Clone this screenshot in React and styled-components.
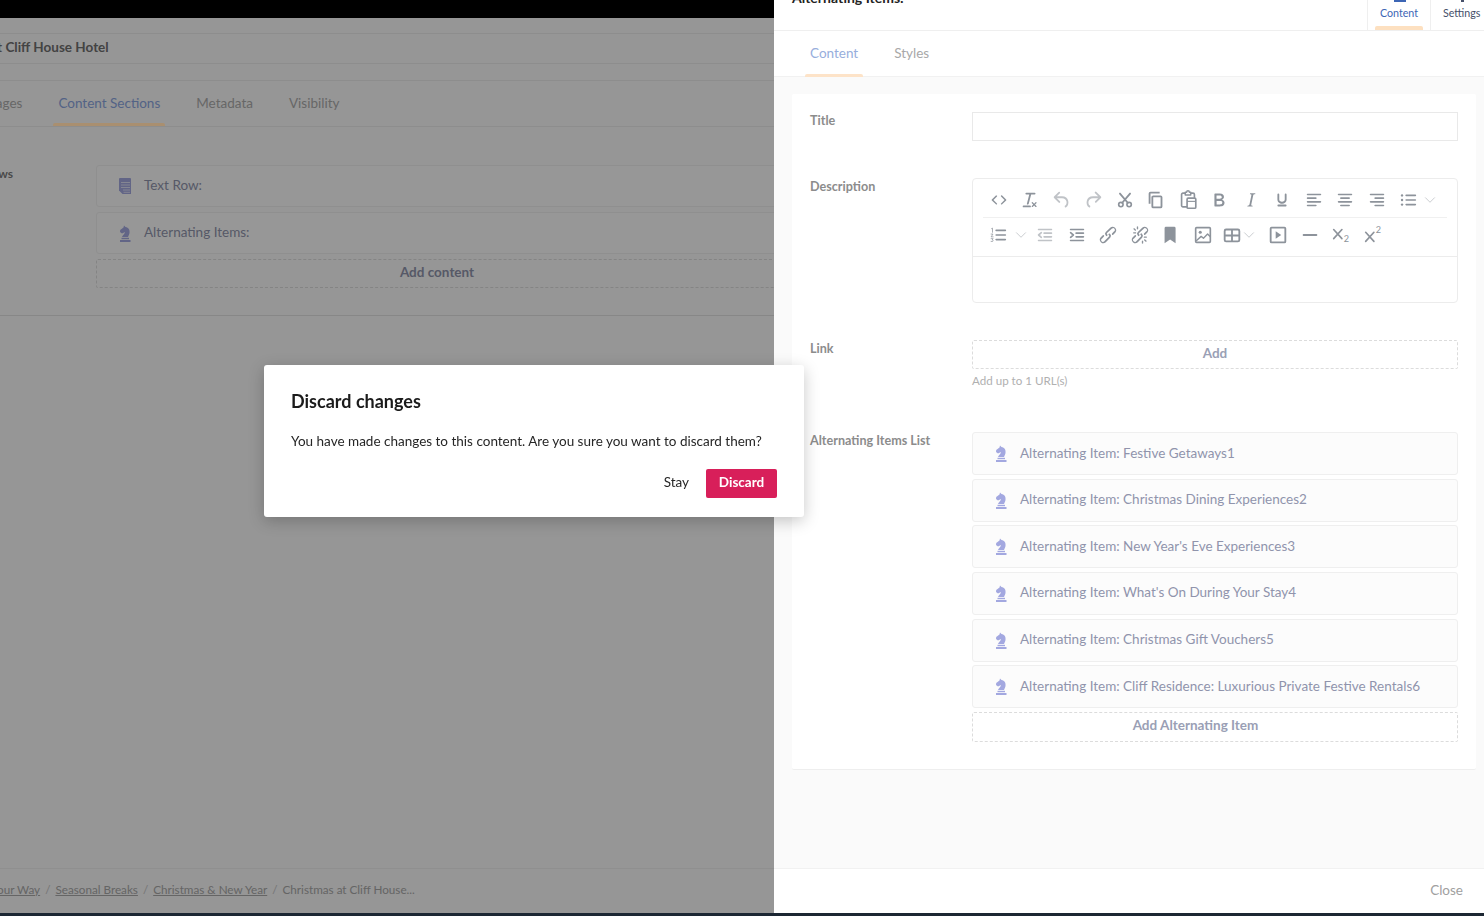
import styled, { createGlobalStyle } from "styled-components";

const GlobalStyle = createGlobalStyle`
  html, body { margin: 0; padding: 0; height: 100%; overflow: hidden; }
  body { font-family: Lato, "Open Sans", sans-serif; background: #1c2733; }
`;

const Page = styled.div`
  display: flex;
  width: 1484px;
  height: 913px;
  overflow: hidden;
  border-bottom: 3px solid #1c2733;
`;

/* ---------- page behind the drawer ---------- */

const Behind = styled.div`
  position: relative;
  width: 774px;
  flex-shrink: 0;
  overflow: hidden;
  background: #fafafa;
  display: flex;
  flex-direction: column;
`;

const Dim = styled.div`
  position: absolute;
  inset: 0;
  background: rgba(0, 0, 0, 0.4);
`;

const BlackBar = styled.div`
  height: 18px;
  flex-shrink: 0;
  background: #000;
`;

const Strip = styled.div`
  height: 15px;
  flex-shrink: 0;
  border-bottom: 1px solid #ececec;
`;

const PageTitle = styled.div`
  height: 26px;
  flex-shrink: 0;
  padding-bottom: 3px;
  border-bottom: 1px solid #ececec;
  display: flex;
  align-items: center;
  margin-left: -73px;
  font-size: 13.5px;
  font-weight: 700;
  color: #707070;
  white-space: nowrap;
`;

const TitleGap = styled.div`
  height: 16px;
  flex-shrink: 0;
  border-bottom: 1px solid #ececec;
`;

const PageTabs = styled.div`
  height: 45px;
  flex-shrink: 0;
  border-bottom: 1px solid #ececec;
  display: flex;
  margin-left: -24px;
  gap: 26px;
`;

const PageTab = styled.div`
  position: relative;
  padding: 0 5px 2px;
  display: flex;
  align-items: center;
  font-size: 13.5px;
  color: ${(p) => (p.$active ? "#8aa5e0" : "#acacac")};
  ${(p) =>
    p.$active &&
    `&::after {
      content: "";
      position: absolute;
      z-index: 1;
      left: 0;
      right: 0;
      bottom: 0;
      height: 3px;
      border-radius: 2px 2px 0 0;
      background: #a98f70;
    }`}
`;

const RowsSection = styled.div`
  height: 189px;
  flex-shrink: 0;
  border-bottom: 1px solid #e2e2e2;
  display: flex;
  padding-top: 38px;
  box-sizing: border-box;
  margin-left: -40px;
`;

const RowsLabel = styled.div`
  width: 136px;
  flex-shrink: 0;
  text-align: right;
  padding-right: 83px;
  box-sizing: border-box;
  font-size: 12px;
  font-weight: 700;
  line-height: 18px;
  color: #7a7a7a;
`;

const RowsList = styled.div`
  width: 682px;
  flex-shrink: 0;
  display: flex;
  flex-direction: column;
  gap: 5px;
`;

const ContentRow = styled.div`
  box-sizing: border-box;
  height: ${(p) => p.$h}px;
  border: 1px solid #efefef;
  border-radius: 3px;
  background: #fcfcfc;
  display: flex;
  align-items: center;
  padding: 0 0 2px 22px;
  gap: 13px;
  font-size: 13.5px;
  color: #9094ac;
`;

const RowIcon = styled.span`
  width: 12px;
  display: flex;
  justify-content: center;
  margin-top: 2px;
`;

const DashedAdd = styled.div`
  box-sizing: border-box;
  height: ${(p) => p.$h}px;
  border: 1px dashed #dcdcdc;
  border-radius: 2px;
  display: flex;
  align-items: center;
  justify-content: center;
  font-size: 13.5px;
  font-weight: 700;
  padding: 0 ${(p) => p.$pr || 0}px 3px 0;
  color: ${(p) => p.$color || "#9094ac"};
`;

const Spacer = styled.div`
  flex: 1;
`;

const Breadcrumb = styled.div`
  height: 45px;
  flex-shrink: 0;
  border-top: 1px solid #eee;
  box-sizing: border-box;
  display: flex;
  align-items: center;
  padding-bottom: 5px;
  font-size: 11.7px;
  color: #a8a8a8;
  margin-left: -34px;
  white-space: nowrap;
`;

const Crumb = styled.span`
  text-decoration: underline;
`;

const CrumbSlash = styled.span`
  margin: 0 5px;
  color: #c4c4c4;
`;

/* ---------- drawer ---------- */

const Drawer = styled.div`
  width: 710px;
  flex-shrink: 0;
  background: #fafafa;
  display: flex;
  flex-direction: column;
`;

const DrawerHead = styled.div`
  height: 31px;
  flex-shrink: 0;
  background: #fff;
  border-bottom: 1px solid #efefef;
  box-sizing: border-box;
  display: flex;
  overflow: hidden;
`;

const DrawerTitle = styled.div`
  flex: 1;
  padding-left: 18px;
  margin-top: -11px;
  font-size: 14px;
  font-weight: 700;
  line-height: 18px;
  color: #222;
`;

const HeadTab = styled.div`
  position: relative;
  box-sizing: border-box;
  width: ${(p) => p.$w}px;
  border-left: 1px solid #efefef;
  display: flex;
  flex-direction: column;
  align-items: ${(p) => (p.$inset ? "flex-start" : "center")};
  padding: 6px 0 0 ${(p) => p.$inset || 0}px;
  font-size: 10.7px;
  line-height: 14px;
  color: ${(p) => (p.$active ? "#3d66b5" : "#46506a")};
  ${(p) =>
    p.$active &&
    `&::after {
      content: "";
      position: absolute;
      left: 7px;
      right: 7px;
      bottom: 0;
      height: 4px;
      border-radius: 2px 2px 0 0;
      background: #fde0c0;
    }`}
`;

const HeadIconCut = styled.span`
  position: absolute;
  top: 0;
  left: ${(p) => p.$x}px;
  height: 2px;
  width: ${(p) => p.$w}px;
  background: ${(p) => p.$color};
`;

const DrawerTabs = styled.div`
  height: 46px;
  flex-shrink: 0;
  background: #fff;
  border-bottom: 1px solid #f1f1f1;
  box-sizing: border-box;
  display: flex;
  padding-left: 31px;
  gap: 26px;
`;

const DrawerTab = styled.div`
  position: relative;
  padding: 0 5px 2px;
  display: flex;
  align-items: center;
  font-size: 13.5px;
  color: ${(p) => (p.$active ? "#97aedc" : "#a8a8a8")};
  ${(p) =>
    p.$active &&
    `&::after {
      content: "";
      position: absolute;
      left: 0;
      right: 0;
      bottom: -1px;
      height: 3px;
      border-radius: 2px 2px 0 0;
      background: #fde3c8;
    }`}
`;

const DrawerBody = styled.div`
  flex: 1;
  padding: 17px 8px 0 18px;
`;

const Card = styled.div`
  box-sizing: border-box;
  background: #fff;
  height: 676px;
  padding: 18px 18px 0;
  border-bottom: 1px solid #eee;
  border-radius: 2px;
`;

const Field = styled.div`
  display: grid;
  grid-template-columns: 162px 486px;
  margin-bottom: ${(p) => p.$mb}px;
`;

const Label = styled.div`
  font-size: 12.6px;
  font-weight: 700;
  line-height: 18px;
  color: #8c8c8c;
`;

const TextInput = styled.div`
  box-sizing: border-box;
  height: 29px;
  border: 1px solid #e9e9e9;
`;

const Editor = styled.div`
  box-sizing: border-box;
  height: 125px;
  border: 1px solid #ececec;
  border-radius: 4px;
  display: flex;
  flex-direction: column;
`;

const Toolbars = styled.div`
  height: 78px;
  flex-shrink: 0;
  box-sizing: border-box;
  border-bottom: 1px solid #ececec;
  padding: 0 10px;
  display: flex;
  flex-direction: column;
`;

const ToolRow = styled.div`
  height: ${(p) => p.$h}px;
  display: flex;
  align-items: center;
  padding: ${(p) => p.$pt || 0}px 0 ${(p) => p.$pb || 0}px;
  border-bottom: ${(p) => (p.$line ? "1px solid #f0f0f0" : "none")};
  box-sizing: border-box;
`;

const Tool = styled.span`
  width: ${(p) => p.$w || 31.5}px;
  flex-shrink: 0;
  display: flex;
  justify-content: center;
  opacity: ${(p) => (p.$faint ? 0.55 : 1)};
  color: #8d939b;

  svg {
    flex-shrink: 0;
  }
`;

const Help = styled.div`
  margin-top: 4px;
  font-size: 11.6px;
  line-height: 15px;
  color: #b0b0b0;
`;

const ItemList = styled.div`
  display: flex;
  flex-direction: column;
  gap: 3.67px;
`;

const DrawerFoot = styled.div`
  height: 45px;
  flex-shrink: 0;
  box-sizing: border-box;
  background: #fff;
  border-top: 1px solid #f1f1f1;
  display: flex;
  align-items: center;
  justify-content: flex-end;
  padding: 0 21px 3px 0;
  font-size: 13.5px;
  color: #a0a0a0;
`;

/* ---------- modal ---------- */

const Modal = styled.div`
  position: fixed;
  left: 264px;
  top: 365px;
  width: 540px;
  height: 152px;
  box-sizing: border-box;
  padding: 25px 27px 0;
  background: #fff;
  border-radius: 3px;
  box-shadow: 0 4px 16px rgba(0, 0, 0, 0.22);
`;

const ModalTitle = styled.div`
  font-size: 18px;
  font-weight: 700;
  line-height: 22px;
  color: #1b1b1b;
`;

const ModalText = styled.div`
  margin-top: 20px;
  font-size: 13.5px;
  line-height: 18px;
  color: #262626;
  white-space: nowrap;
`;

const ModalActions = styled.div`
  margin-top: 19px;
  display: flex;
  justify-content: flex-end;
  align-items: center;
  gap: 17px;
`;

const StayButton = styled.div`
  font-size: 13.5px;
  padding-bottom: 4px;
  color: #262626;
`;

const DiscardButton = styled.div`
  width: 71px;
  height: 29px;
  box-sizing: border-box;
  padding-bottom: 4px;
  border-radius: 2px;
  background: #d81f5a;
  color: #fff;
  font-size: 13.5px;
  font-weight: 700;
  display: flex;
  align-items: center;
  justify-content: center;
`;

/* ---------- icons ---------- */

const Svg = ({ children, size = 24 }) => (
  <svg width={size} height={size} viewBox="0 0 24 24" fill="currentColor">
    {children}
  </svg>
);

const Lines = ({ d, w = 2 }) => (
  <path d={d} fill="none" stroke="currentColor" strokeWidth={w} strokeLinecap="round" strokeLinejoin="round" />
);

const ICONS = {
  code: <path d="M9.8 15.7c.3.3.3.8 0 1-.3.4-.9.4-1.2 0l-4.4-4.1a.8.8 0 0 1 0-1.2l4.4-4.2c.3-.3.9-.3 1.2 0 .3.3.3.8 0 1.1L6 12l3.8 3.7zM14.2 15.7c-.3.3-.3.8 0 1 .4.4.9.4 1.2 0l4.4-4.1c.3-.3.3-.9 0-1.2l-4.4-4.2a.8.8 0 0 0-1.2 0c-.3.3-.3.8 0 1.1L18 12l-3.8 3.7z" />,
  clear: <path d="M13.2 6a1 1 0 0 1 0 .2l-2.6 10a1 1 0 0 1-1 .8h-.2a.8.8 0 0 1-.8-1l2.6-10H8a1 1 0 1 1 0-2h9a1 1 0 0 1 0 2h-3.8zM5 18h7a1 1 0 0 1 0 2H5a1 1 0 0 1 0-2zm13 1.5L16.5 18 15 19.5a.7.7 0 0 1-1-1l1.5-1.5-1.5-1.5a.7.7 0 0 1 1-1l1.5 1.5 1.5-1.5a.7.7 0 0 1 1 1L17.5 17l1.5 1.5a.7.7 0 0 1-1 1z" />,
  undo: <path d="M6.4 8H12c3.7 0 6.2 2 6.8 5.1.6 2.7-.4 5.6-2.3 6.8a1 1 0 0 1-1-1.8c1.1-.6 1.8-2.7 1.4-4.6-.5-2.1-2.1-3.5-4.9-3.5H6.4l3.3 3.3a1 1 0 1 1-1.4 1.4l-5-5a1 1 0 0 1 0-1.4l5-5a1 1 0 0 1 1.4 1.4L6.4 8z" />,
  redo: <path d="M17.6 10H12c-2.8 0-4.4 1.4-4.9 3.5-.4 2 .3 4 1.4 4.6a1 1 0 1 1-1 1.8c-2-1.2-2.9-4.1-2.3-6.8.6-3 3-5.1 6.8-5.1h5.6l-3.3-3.3a1 1 0 1 1 1.4-1.4l5 5a1 1 0 0 1 0 1.4l-5 5a1 1 0 0 1-1.4-1.4l3.3-3.3z" />,
  cut: (
    <>
      <Lines d="M6.5 5l8.5 10M17.500 5L9 15" />
      <circle cx="7.5" cy="17" r="2.4" fill="none" stroke="currentColor" strokeWidth="1.8" />
      <circle cx="16.5" cy="17" r="2.4" fill="none" stroke="currentColor" strokeWidth="1.8" />
    </>
  ),
  copy: <path d="M16 3H6a2 2 0 0 0-2 2v11h2V5h10V3zm1 4a2 2 0 0 1 2 2v10a2 2 0 0 1-2 2H9a2 2 0 0 1-2-2V9c0-1.100.9-2 2-2h8zm0 2H9v10h8V9z" />,
  paste: (
    <>
      <Lines d="M10.500 19.500H6.500a1.500 1.500 0 0 1-1.500-1.500V6a1.500 1.500 0 0 1 1.500-1.500h2M15.500 4.500h2A1.500 1.500 0 0 1 19 6v3" w={1.8} />
      <Lines d="M9 6.500V3.500h1.500a1.500 1.500 0 0 1 3 0H15v3z" w={1.6} />
      <rect x="11" y="10" width="9.500" height="11" rx="1.200" fill="none" stroke="currentColor" strokeWidth="1.800" />
      <path d="M11 13.500h9.500" stroke="currentColor" strokeWidth="1.200" />
    </>
  ),
  bold: <path d="M7.800 19c-.3 0-.5 0-.6-.2l-.2-.5V5.700c0-.2 0-.4.2-.5l.6-.2h5c1.500 0 2.700.3 3.500 1 .7.6 1.100 1.400 1.100 2.500a3 3 0 0 1-.6 1.900c-.4.6-1 1-1.600 1.200.4.1.9.3 1.300.6s.8.7 1 1.200c.4.4.5 1 .5 1.600 0 1.300-.4 2.300-1.300 3-.8.7-2.100 1-3.800 1H7.800zm5-8.300c.6 0 1.200-.1 1.600-.5.4-.3.6-.7.6-1.300 0-1.100-.8-1.700-2.300-1.700H9.300v3.500h3.400zm.5 6c.7 0 1.300-.1 1.700-.4.4-.4.6-.9.6-1.500s-.2-1-.7-1.400c-.4-.3-1-.4-2-.4H9.400v3.800h4z" />,
  italic: <path d="M16.700 4.700l-.1.9h-.3c-.6 0-1 0-1.400.3-.3.3-.4.6-.5 1.100l-2.100 9.800v.6c0 .5.4.8 1.400.8h.2l-.2.8H8l.2-.8h.2c1.100 0 1.800-.5 2-1.500l2-9.800.1-.5c0-.6-.4-.8-1.400-.8h-.3l.2-.9h5.800z" />,
  underline: <path d="M16 5c.6 0 1 .4 1 1v5.500a4 4 0 0 1-.4 1.800l-1 1.400a5.300 5.300 0 0 1-5.500 1 5 5 0 0 1-1.600-1c-.5-.4-.8-.9-1.100-1.400a4 4 0 0 1-.4-1.800V6c0-.6.4-1 1-1s1 .4 1 1v5.500c0 .3 0 .6.2 1l.6.7a3.300 3.300 0 0 0 2.200.8 3.400 3.400 0 0 0 2.200-.8c.3-.2.4-.5.6-.8l.2-.9V6c0-.6.4-1 1-1zM8 17h8c.6 0 1 .4 1 1s-.4 1-1 1H8a1 1 0 0 1 0-2z" />,
  alignLeft: <Lines d="M5 6h14M5 10h9M5 14h14M5 18h9" w={1.800} />,
  alignCenter: <Lines d="M5 6h14M7.500 10h9M5 14h14M7.500 18h9" w={1.800} />,
  alignRight: <Lines d="M5 6h14M10 10h9M5 14h14M10 18h9" w={1.800} />,
  list: (
    <>
      <Lines d="M10 7h10M10 12h10M10 17h10" w={1.800} />
      <circle cx="5.500" cy="7" r="1.300" />
      <circle cx="5.500" cy="12" r="1.300" />
      <circle cx="5.500" cy="17" r="1.300" />
    </>
  ),
  orderedList: (
    <>
      <Lines d="M10 7h10M10 12h10M10 17h10" w={1.800} />
      <Lines d="M5 5l1-.5V9M4.500 11h2l-2 3h2.200M4.500 16h2.200l-1 1.300h.4a.9.9 0 0 1 0 1.700H4.500" w={0.800} />
    </>
  ),
  outdent: <Lines d="M5 6h14M11 10h8M11 14h8M5 18h14M8 9.500L5 12l3 2.500" w={1.800} />,
  indent: <Lines d="M5 6h14M11 10h8M11 14h8M5 18h14M5 9.500L8 12l-3 2.500" w={1.800} />,
  link: <path d="M6.200 12.300a1 1 0 0 1 1.400 1.400l-2 2a2 2 0 1 0 2.600 2.800l4.800-4.800a1 1 0 0 0 0-1.400 1 1 0 1 1 1.400-1.300 2.900 2.900 0 0 1 0 4L9.600 20a3.900 3.900 0 0 1-5.500-5.500l2-2zm11.600-.6a1 1 0 0 1-1.400-1.400l2-2a2 2 0 1 0-2.600-2.800L11 9.900a1 1 0 0 0 0 1.400 1 1 0 1 1-1.400 1.300 2.900 2.900 0 0 1 0-4L14.400 4a3.900 3.900 0 0 1 5.500 5.500l-2 2z" />,
  unlink: <path d="M6.200 12.300a1 1 0 0 1 1.400 1.400l-2.100 2a2 2 0 1 0 2.700 2.800l4.800-4.800a1 1 0 0 0 0-1.400 1 1 0 1 1 1.300-1.300 2.900 2.900 0 0 1 0 4L9.600 20a3.900 3.900 0 0 1-5.500-5.500l2-2zm11.600-.6a1 1 0 0 1-1.400-1.400l2.100-2a2 2 0 1 0-2.700-2.800L11 9.900a1 1 0 0 0 0 1.400 1 1 0 1 1-1.400 1.300 2.900 2.900 0 0 1 0-4L14.400 4a3.900 3.900 0 0 1 5.500 5.500l-2 2zM7.600 6.300a.8.8 0 0 1-1 1.100L4.900 5.600a.8.8 0 0 1 1.100-1l1.600 1.700zM5 10.400a.8.8 0 0 1 0-1.500h2.400a.8.8 0 0 1 0 1.500H5zm5-5a.8.8 0 0 1-1.500 0V3a.8.8 0 0 1 1.500 0v2.400zm6.400 12.300a.8.8 0 0 1 1-1.100l1.800 1.800a.8.8 0 0 1-1.100 1l-1.700-1.700zM19 13.600a.8.8 0 0 1 0 1.500h-2.400a.8.8 0 0 1 0-1.500H19zm-5 5a.8.8 0 0 1 1.500 0V21a.8.8 0 0 1-1.500 0v-2.400z" />,
  bookmark: <path d="M5 4.500A1.500 1.500 0 0 1 6.500 3h9A1.500 1.500 0 0 1 17 4.500V21l-6-4-6 4z" />,
  image: (
    <>
      <rect x="4" y="4" width="16" height="16" fill="none" stroke="currentColor" strokeWidth="1.800" rx="1" />
      <circle cx="9" cy="9" r="1.700" />
      <Lines d="M5 18l5-4.500 2.500 2L17 11l3 3" w={1.500} />
    </>
  ),
  table: (
    <>
      <rect x="4" y="6" width="16" height="13" rx="1.500" fill="none" stroke="currentColor" strokeWidth="2" />
      <path d="M4 12.500h16M12 6v13" stroke="currentColor" strokeWidth="2" />
    </>
  ),
  media: (
    <>
      <rect x="4" y="4" width="16" height="16" rx="1" fill="none" stroke="currentColor" strokeWidth="2" />
      <path d="M9.500 8l6 4-6 4z" />
    </>
  ),
  hr: <Lines d="M5 12h14" w={2} />,
  sub: (
    <>
      <Lines d="M4 6l9 10M13 6l-9 10" w={1.800} />
      <text x="15" y="20" fontSize="10" fontFamily="Lato, sans-serif">2</text>
    </>
  ),
  sup: (
    <>
      <Lines d="M4 9l9 10M13 9l-9 10" w={1.800} />
      <text x="15" y="10" fontSize="10" fontFamily="Lato, sans-serif">2</text>
    </>
  ),
  chevron: <Lines d="M6 9l6 6 6-6" w={1.100} />,
};

const TOP_TOOLS = [
  { icon: "code" },
  { icon: "clear" },
  { icon: "undo", faint: true },
  { icon: "redo", faint: true },
  { icon: "cut" },
  { icon: "copy" },
  { icon: "paste" },
  { icon: "bold" },
  { icon: "italic" },
  { icon: "underline" },
  { icon: "alignLeft" },
  { icon: "alignCenter" },
  { icon: "alignRight" },
  { icon: "list" },
  { icon: "chevron", w: 11, faint: true },
];

const BOTTOM_TOOLS = [
  { icon: "orderedList", w: 30 },
  { icon: "chevron", w: 15, faint: true },
  { icon: "outdent", w: 33, faint: true },
  { icon: "indent" },
  { icon: "link" },
  { icon: "unlink" },
  { icon: "bookmark" },
  { icon: "image" },
  { icon: "table", w: 27 },
  { icon: "chevron", w: 7, faint: true },
  { icon: "media", w: 50 },
  { icon: "hr", w: 15 },
  { icon: "sub", w: 47 },
  { icon: "sup", w: 17 },
];

const ITEMS = [
  "Festive Getaways1",
  "Christmas Dining Experiences2",
  "New Year's Eve Experiences3",
  "What's On During Your Stay4",
  "Christmas Gift Vouchers5",
  "Cliff Residence: Luxurious Private Festive Rentals6",
];

const KnightIcon = () => (
  <svg width="12" height="17" viewBox="0 0 12 17" fill="#a3a8e0">
    <path d="M5 .5L6.500 2c3 .3 4.500 3 4 6-.2 1.500-1 2.500-1.500 4H3c.5-2 3-3 3-5L3 8.500 1 7l.2-2 3.300-2.500z" />
    <path d="M2.500 12.800H10v1.400H2.500z" />
    <path d="M1 15h10.500v2H1z" />
  </svg>
);

const DocIcon = () => (
  <svg width="12" height="16" viewBox="0 0 12 16" fill="none">
    <path d="M0 1a1 1 0 0 1 1-1h10a1 1 0 0 1 1 1v15H3.500L0 12.500z" fill="#a3a8e0" />
    <path d="M2 4.500h9M2 7h9M2 9.500h9M4 12h7M4.500 14.300h6.500" stroke="#e4e5f5" strokeWidth="0.900" />
  </svg>
);

const Toolbar = ({ tools }) =>
  tools.map((t, i) => (
    <Tool key={i} $w={t.w} $faint={t.faint}>
      <Svg size={t.icon === "chevron" ? 18 : 22}>{ICONS[t.icon]}</Svg>
    </Tool>
  ));

const App = () => (
  <>
    <GlobalStyle />
    <Page>
      <Behind>
        <BlackBar />
        <Strip />
        <PageTitle>Christmas at Cliff House Hotel</PageTitle>
        <TitleGap />
        <PageTabs>
          <PageTab>Images</PageTab>
          <PageTab $active>Content Sections</PageTab>
          <PageTab>Metadata</PageTab>
          <PageTab>Visibility</PageTab>
        </PageTabs>
        <RowsSection>
          <RowsLabel>Rows</RowsLabel>
          <RowsList>
            <ContentRow $h={42}>
              <RowIcon><DocIcon /></RowIcon>
              Text Row:
            </ContentRow>
            <ContentRow $h={42}>
              <RowIcon><KnightIcon /></RowIcon>
              Alternating Items:
            </ContentRow>
            <DashedAdd $h={29}>Add content</DashedAdd>
          </RowsList>
        </RowsSection>
        <Spacer />
        <Breadcrumb>
          <Crumb>Find Your Way</Crumb>
          <CrumbSlash>/</CrumbSlash>
          <Crumb>Seasonal Breaks</Crumb>
          <CrumbSlash>/</CrumbSlash>
          <Crumb>Christmas &amp; New Year</Crumb>
          <CrumbSlash>/</CrumbSlash>
          <span>Christmas at Cliff House...</span>
        </Breadcrumb>
        <Dim />
      </Behind>

      <Drawer>
        <DrawerHead>
          <DrawerTitle>Alternating Items:</DrawerTitle>
          <HeadTab $w={63} $active>
            <HeadIconCut $x={26} $w={12} $color="#3d66b5" />
            Content
          </HeadTab>
          <HeadTab $w={54} $inset={12}>
            <HeadIconCut $x={30} $w={3} $color="#46506a" />
            Settings
          </HeadTab>
        </DrawerHead>
        <DrawerTabs>
          <DrawerTab $active>Content</DrawerTab>
          <DrawerTab>Styles</DrawerTab>
        </DrawerTabs>
        <DrawerBody>
          <Card>
            <Field $mb={37}>
              <Label>Title</Label>
              <TextInput />
            </Field>
            <Field $mb={37}>
              <Label>Description</Label>
              <Editor>
                <Toolbars>
                  <ToolRow $h={39} $pt={5} $line><Toolbar tools={TOP_TOOLS} /></ToolRow>
                  <ToolRow $h={39} $pb={3}><Toolbar tools={BOTTOM_TOOLS} /></ToolRow>
                </Toolbars>
              </Editor>
            </Field>
            <Field $mb={44}>
              <Label>Link</Label>
              <div>
                <DashedAdd $h={29} $color="#9a9fb5">Add</DashedAdd>
                <Help>Add up to 1 URL(s)</Help>
              </div>
            </Field>
            <Field $mb={0}>
              <Label>Alternating Items List</Label>
              <ItemList>
                {ITEMS.map((item) => (
                  <ContentRow key={item} $h={43}>
                    <RowIcon><KnightIcon /></RowIcon>
                    Alternating Item: {item}
                  </ContentRow>
                ))}
                <DashedAdd $h={30} $pr={39} $color="#9a9fb5">Add Alternating Item</DashedAdd>
              </ItemList>
            </Field>
          </Card>
        </DrawerBody>
        <DrawerFoot>Close</DrawerFoot>
      </Drawer>

      <Modal>
        <ModalTitle>Discard changes</ModalTitle>
        <ModalText>You have made changes to this content. Are you sure you want to discard them?</ModalText>
        <ModalActions>
          <StayButton>Stay</StayButton>
          <DiscardButton>Discard</DiscardButton>
        </ModalActions>
      </Modal>
    </Page>
  </>
);

export default App;
